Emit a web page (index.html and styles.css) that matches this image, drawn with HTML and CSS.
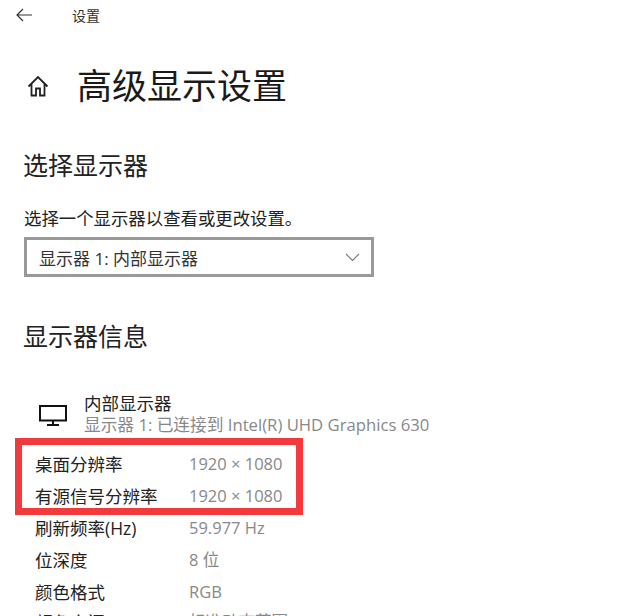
FILE: index.html
```html
<!DOCTYPE html>
<html lang="zh-CN">
<head>
    <meta charset="UTF-8">
    <meta name="viewport" content="width=device-width, initial-scale=1.0">
    <title>设置</title>
    <link rel="stylesheet" href="styles.css">
</head>
<body>
    <div class="top-bar">
        <svg class="back-icon" width="16" height="14" viewBox="0 0 16 14" fill="none" stroke="#333" stroke-width="1.2"><path d="M16 7H1M7 1L1 7l6 6"/></svg>
        <span class="top-title">设置</span>
    </div>

    <div class="page-head">
        <svg class="home-icon" width="22" height="22" viewBox="0 0 22 22" fill="none" stroke="#222" stroke-width="1.8"><path d="M1.5 11.5L11 2l9.5 9.5M4.5 9v11.500h4.500v-7h4v7h4.500V9"/></svg>
        <h1 class="page-title">高级显示设置</h1>
    </div>

    <h2 class="section-title first">选择显示器</h2>
    <p class="select-label">选择一个显示器以查看或更改设置。</p>
    <div class="select-box">
        <span>显示器 1: 内部显示器</span>
        <svg width="15" height="9" viewBox="0 0 15 9" fill="none" stroke="#777" stroke-width="1.100"><path d="M1 1l6.500 6.500L14 1"/></svg>
    </div>

    <h2 class="section-title second">显示器信息</h2>
    <div class="monitor">
        <svg class="monitor-icon" width="28" height="21" viewBox="0 0 28 21" fill="none" stroke="#111" stroke-width="2"><path d="M1 1h26v14.500H1zM14 15.500v4M8 20h12"/></svg>
        <div>
            <div class="monitor-name">内部显示器</div>
            <div class="monitor-sub">显示器 1: 已连接到 Intel(R) UHD Graphics 630</div>
        </div>
    </div>

    <div class="info-rows">
        <!-- red box drawn over the screenshot -->
        <div class="highlight"></div>
        <div class="row"><span class="row-label">桌面分辨率</span><span class="row-value">1920 × 1080</span></div>
        <div class="row"><span class="row-label">有源信号分辨率</span><span class="row-value">1920 × 1080</span></div>
        <div class="row"><span class="row-label">刷新频率(Hz)</span><span class="row-value">59.977 Hz</span></div>
        <div class="row"><span class="row-label">位深度</span><span class="row-value">8 位</span></div>
        <div class="row"><span class="row-label">颜色格式</span><span class="row-value">RGB</span></div>
        <div class="row last"><span class="row-label">颜色空间</span><span class="row-value">标准动态范围 (SDR)</span></div>
    </div>
</body>
</html>
```

FILE: styles.css
```css
html, body {
    margin: 0;
    padding: 0;
    height: 616px;
    overflow: hidden;
    background: #fff;
}

body {
    font-family: "Open Sans", "Noto Sans CJK SC", sans-serif;
    color: #222;
}

.top-bar {
    display: flex;
    align-items: center;
    height: 30px;
    padding-left: 16px;
}

.top-title {
    margin-left: 40px;
    font-size: 14px;
    color: #333;
}

.page-head {
    display: flex;
    align-items: center;
    height: 44px;
    margin-top: 34px;
    padding-left: 27px;
}

.page-title {
    margin: 0 0 0 28px;
    font-size: 35px;
    line-height: 44px;
    font-weight: 400;
    color: #1a1a1a;
}

.section-title {
    margin: 0;
    padding-left: 23px;
    font-size: 25px;
    line-height: 34px;
    font-weight: 400;
    color: #222;
}

.section-title.first {
    margin-top: 40px;
}

.section-title.second {
    margin-top: 42px;
}

.select-label {
    margin: 24px 0 0;
    padding-left: 24px;
    font-size: 17.400px;
    line-height: 24px;
}

.select-box {
    display: flex;
    justify-content: space-between;
    align-items: center;
    box-sizing: border-box;
    width: 350px;
    height: 40px;
    margin: 7px 0 0 24px;
    padding: 0 11px 0 12px;
    border: 3px solid #999;
    font-size: 17px;
    color: #333;
}

.monitor {
    display: flex;
    margin-top: 38px;
    padding-left: 39px;
}

.monitor-icon {
    margin: 14px 17px 0 0;
}

.monitor-name {
    padding-top: 1px;
    font-size: 17.500px;
    line-height: 22px;
    color: #222;
}

.monitor-sub {
    font-size: 16.700px;
    line-height: 22px;
    color: #888;
}

.info-rows {
    position: relative;
    margin-top: 11px;
}

.highlight {
    position: absolute;
    top: -9px;
    left: 15px;
    box-sizing: border-box;
    width: 288px;
    height: 77px;
    border: 7px solid #f23a3c;
}

.row {
    display: flex;
    height: 32px;
    padding-left: 35px;
    align-items: center;
    font-size: 17.500px;
    white-space: nowrap;
}

.row.last {
    margin-top: -2px;
}

.row-label {
    width: 154px;
    flex-shrink: 0;
    color: #222;
}

.row-value {
    font-size: 16.500px;
    color: #888;
}
```
